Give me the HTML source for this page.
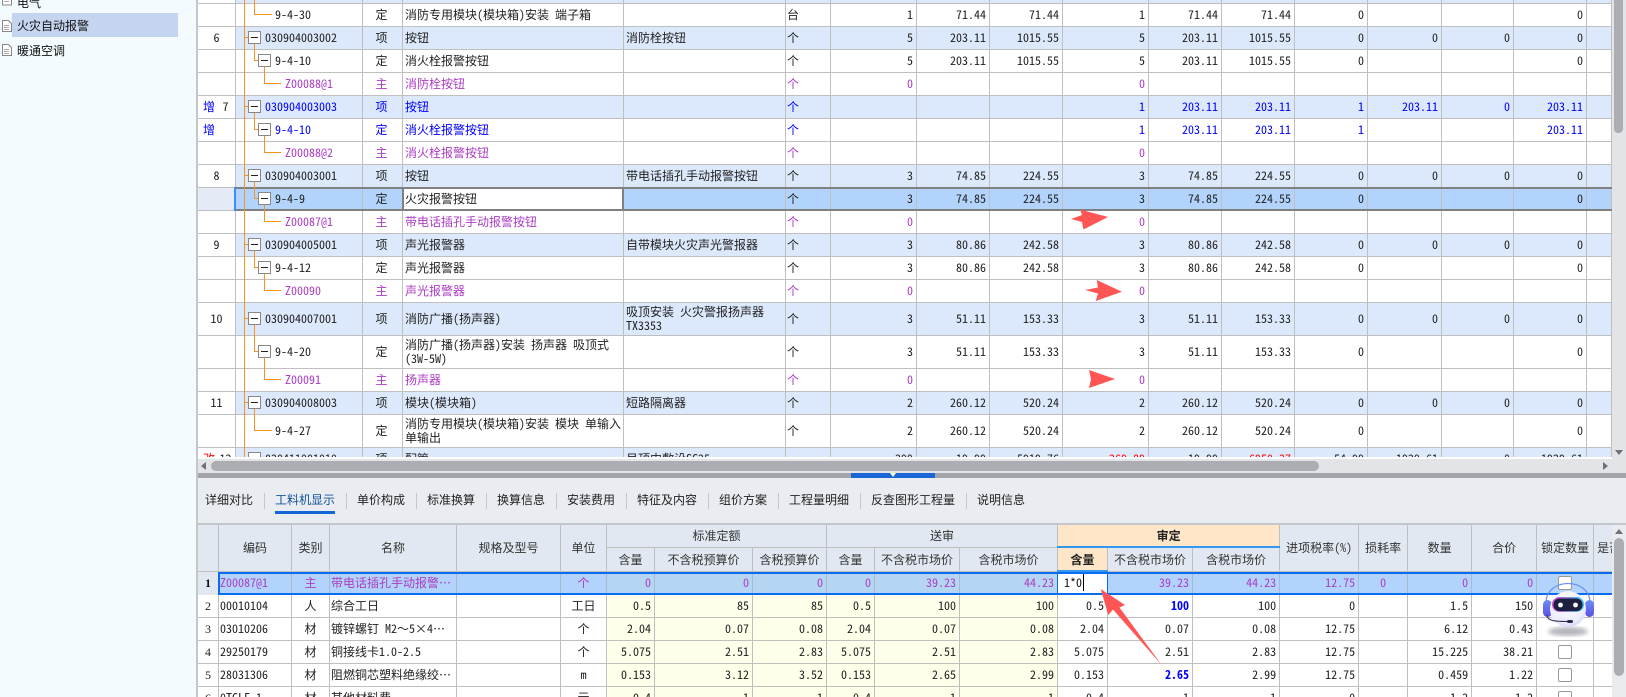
<!DOCTYPE html>
<html lang="zh"><head><meta charset="utf-8"><title>工料机显示</title>
<style>
*{box-sizing:border-box}
html,body{margin:0;padding:0}
body{width:1626px;height:697px;overflow:hidden;position:relative;background:#fff;font:12px/14px "WenQuanYi Zen Hei Mono","Noto Sans Mono CJK SC","WenQuanYi Zen Hei","Noto Sans CJK SC",monospace;color:#222}
.a{position:absolute}
#side{left:0;top:0;width:198px;height:697px;background:#f4fbff;border-right:2px solid #c4c6c9}
#side div{position:absolute;left:17px;white-space:nowrap;color:#111}
table{border-collapse:separate;border-spacing:0;table-layout:fixed;position:absolute;left:0}
td,th{padding:0 3px;border-right:1px solid #bfbfbf;border-bottom:1px solid #bfbfbf;font-weight:normal;overflow:hidden;white-space:nowrap;text-align:right;position:relative}
#top{left:198px;top:0;width:1414px;height:457px;overflow:hidden}
#top table{top:-19px;width:1414px}
#top tr{height:23px}
#top tr.h{height:33px}
#top td:nth-child(1){text-align:center;background:#fff;padding:0}
#top td:nth-child(2){text-align:left;padding-left:29px}
#top td:nth-child(3){text-align:center;padding:0 2px 0 0}
#top td:nth-child(4),#top td:nth-child(5){text-align:left;white-space:normal;padding-left:2px}
#top td:nth-child(6){text-align:left;padding-left:1px}
#top tr.b td{background:#dce9fc}
#top tr.b td:nth-child(1){background:#fff}
#top tr.s td{background:#b2d4fc}
#top tr.s td:nth-child(1){background:#e4eaf6}
#top tr.s td:nth-child(4){background:#fff}
tr.p td{color:#ac3cc4}
tr.u td{color:#00f}
#top tr.l1 td:nth-child(2){padding-left:39px}
#top tr.l2 td:nth-child(2){padding-left:49px}
#top td:nth-child(1) i{font-style:normal;position:absolute;left:5px;top:4px;color:#00f}
.r{color:#f00!important}
#bot{left:198px;top:525px;width:1414px;height:172px;overflow:hidden}
#bot table{top:0;width:1415px}
#bot thead th{background:#e2e8f1;text-align:center;color:#333;padding:0}
#bot tbody tr{height:23px}
#bot tbody td:nth-child(1){text-align:center;padding:0;font-family:"Liberation Serif",serif}
#bot tbody td:nth-child(2){text-align:left;padding-left:1px}
#bot tbody td:nth-child(3),#bot tbody td:nth-child(6),#bot tbody td:nth-child(17),#bot tbody td:nth-child(20){text-align:center;padding:0}
#bot tbody td:nth-child(4),#bot tbody td:nth-child(5){text-align:left;padding-left:1px}
#bot tbody td:nth-child(n+7):nth-child(-n+12){background:#ffffea}
#bot tr.f td{background:#b2d4fc!important;border-right-color:#a8bace;border-bottom-color:transparent}
#bot tr.f td:nth-child(n+7):nth-child(-n+12){background:#b4d6f2!important}
#bot tr.f td:nth-child(1){background:#e2e8f1!important;font-weight:bold;color:#111}
.o{background:#ffe6c8!important;color:#222!important;font-weight:bold!important}
.bb{color:#00f;font-weight:bold}
.c{display:inline-block;width:14px;height:14px;border:1px solid #999;border-radius:2px;background:#fff;vertical-align:middle}
.tab{position:absolute;top:493px;white-space:nowrap;color:#222}
.sp{position:absolute;top:493px;width:1px;height:16px;background:#c4c8cc}
</style></head><body>

<div class="a" id="side">
<div style="top:-4px">电气</div>
<div style="left:12px;top:13px;width:166px;height:24px;background:#c5d4ef"></div>
<div style="top:19px">火灾自动报警</div>
<div style="top:44px">暖通空调</div>
<svg class="a" style="left:0;top:0" width="14" height="60" fill="#fff" stroke="#888"><path d="M2.5-5h6l3 3v7h-9z"/><path d="M2.5 20.500h6l3 3v8h-9z"/><path d="M2.500 44.500h6l3 3v8h-9z"/><path d="M4 25.500h5M4 27.500h5M4 29.500h5M4 49.500h5M4 51.500h5M4 53.500h5M4 1.500h5" stroke="#aaa" fill="none"/></svg>
</div>

<div class="a" id="top">
<table>
<colgroup><col style="width:38px"><col style="width:127px"><col style="width:40px"><col style="width:221px"><col style="width:162px"><col style="width:45px"><col style="width:86px"><col style="width:73px"><col style="width:73px"><col style="width:86px"><col style="width:73px"><col style="width:73px"><col style="width:73px"><col style="width:74px"><col style="width:72px"><col style="width:73px"><col style="width:25px"></colgroup>
<tr class="b"><td></td><td></td><td></td><td></td><td></td><td></td><td></td><td></td><td></td><td></td><td></td><td></td><td></td><td></td><td></td><td></td><td></td></tr>
<tr class="l1"><td></td><td>9-4-30</td><td>定</td><td>消防专用模块(模块箱)安装 端子箱</td><td></td><td>台</td><td>1</td><td>71.44</td><td>71.44</td><td>1</td><td>71.44</td><td>71.44</td><td>0</td><td></td><td></td><td>0</td><td></td></tr>
<tr class="b"><td>6</td><td>030904003002</td><td>项</td><td>按钮</td><td>消防栓按钮</td><td>个</td><td>5</td><td>203.11</td><td>1015.55</td><td>5</td><td>203.11</td><td>1015.55</td><td>0</td><td>0</td><td>0</td><td>0</td><td></td></tr>
<tr class="l1"><td></td><td>9-4-10</td><td>定</td><td>消火栓报警按钮</td><td></td><td>个</td><td>5</td><td>203.11</td><td>1015.55</td><td>5</td><td>203.11</td><td>1015.55</td><td>0</td><td></td><td></td><td>0</td><td></td></tr>
<tr class="l2 p"><td></td><td>Z00088@1</td><td>主</td><td>消防栓按钮</td><td></td><td>个</td><td>0</td><td></td><td></td><td>0</td><td></td><td></td><td></td><td></td><td></td><td></td><td></td></tr>
<tr class="b u"><td style="color:#222"><i>增</i><span style="margin-left:18px">7</span></td><td>030904003003</td><td>项</td><td>按钮</td><td></td><td>个</td><td></td><td></td><td></td><td>1</td><td>203.11</td><td>203.11</td><td>1</td><td>203.11</td><td>0</td><td>203.11</td><td></td></tr>
<tr class="l1 u"><td><i>增</i></td><td>9-4-10</td><td>定</td><td>消火栓报警按钮</td><td></td><td>个</td><td></td><td></td><td></td><td>1</td><td>203.11</td><td>203.11</td><td>1</td><td></td><td></td><td>203.11</td><td></td></tr>
<tr class="l2 p"><td></td><td>Z00088@2</td><td>主</td><td>消火栓报警按钮</td><td></td><td>个</td><td></td><td></td><td></td><td>0</td><td></td><td></td><td></td><td></td><td></td><td></td><td></td></tr>
<tr class="b"><td>8</td><td>030904003001</td><td>项</td><td>按钮</td><td>带电话插孔手动报警按钮</td><td>个</td><td>3</td><td>74.85</td><td>224.55</td><td>3</td><td>74.85</td><td>224.55</td><td>0</td><td>0</td><td>0</td><td>0</td><td></td></tr>
<tr class="l1 s"><td></td><td>9-4-9</td><td>定</td><td>火灾报警按钮</td><td></td><td>个</td><td>3</td><td>74.85</td><td>224.55</td><td>3</td><td>74.85</td><td>224.55</td><td>0</td><td></td><td></td><td>0</td><td></td></tr>
<tr class="l2 p"><td></td><td>Z00087@1</td><td>主</td><td>带电话插孔手动报警按钮</td><td></td><td>个</td><td>0</td><td></td><td></td><td>0</td><td></td><td></td><td></td><td></td><td></td><td></td><td></td></tr>
<tr class="b"><td>9</td><td>030904005001</td><td>项</td><td>声光报警器</td><td>自带模块火灾声光警报器</td><td>个</td><td>3</td><td>80.86</td><td>242.58</td><td>3</td><td>80.86</td><td>242.58</td><td>0</td><td>0</td><td>0</td><td>0</td><td></td></tr>
<tr class="l1"><td></td><td>9-4-12</td><td>定</td><td>声光报警器</td><td></td><td>个</td><td>3</td><td>80.86</td><td>242.58</td><td>3</td><td>80.86</td><td>242.58</td><td>0</td><td></td><td></td><td>0</td><td></td></tr>
<tr class="l2 p"><td></td><td>Z00090</td><td>主</td><td>声光报警器</td><td></td><td>个</td><td>0</td><td></td><td></td><td>0</td><td></td><td></td><td></td><td></td><td></td><td></td><td></td></tr>
<tr class="b h"><td>10</td><td>030904007001</td><td>项</td><td>消防广播(扬声器)</td><td>吸顶安装 火灾警报扬声器<br>TX3353</td><td>个</td><td>3</td><td>51.11</td><td>153.33</td><td>3</td><td>51.11</td><td>153.33</td><td>0</td><td>0</td><td>0</td><td>0</td><td></td></tr>
<tr class="l1 h"><td></td><td>9-4-20</td><td>定</td><td>消防广播(扬声器)安装 扬声器 吸顶式<br>(3W-5W)</td><td></td><td>个</td><td>3</td><td>51.11</td><td>153.33</td><td>3</td><td>51.11</td><td>153.33</td><td>0</td><td></td><td></td><td>0</td><td></td></tr>
<tr class="l2 p"><td></td><td>Z00091</td><td>主</td><td>扬声器</td><td></td><td>个</td><td>0</td><td></td><td></td><td>0</td><td></td><td></td><td></td><td></td><td></td><td></td><td></td></tr>
<tr class="b"><td>11</td><td>030904008003</td><td>项</td><td>模块(模块箱)</td><td>短路隔离器</td><td>个</td><td>2</td><td>260.12</td><td>520.24</td><td>2</td><td>260.12</td><td>520.24</td><td>0</td><td>0</td><td>0</td><td>0</td><td></td></tr>
<tr class="l1 h"><td></td><td>9-4-27</td><td>定</td><td style="white-space:nowrap">消防专用模块(模块箱)安装 模块 单输入<br>单输出</td><td></td><td>个</td><td>2</td><td>260.12</td><td>520.24</td><td>2</td><td>260.12</td><td>520.24</td><td>0</td><td></td><td></td><td>0</td><td></td></tr>
<tr class="b"><td><i class="r">改</i><span style="margin-left:18px">12</span></td><td>030411001010</td><td>项</td><td>配管</td><td>吊顶内敷设SC25</td><td></td><td>399</td><td>19.99</td><td>5919.76</td><td class="r">269.89</td><td>19.99</td><td class="r">6950.37</td><td>54.99</td><td>1929.61</td><td>0</td><td>1929.61</td><td></td></tr>
</table>
</div>

<!-- selected row outline -->
<div class="a" style="left:236px;top:187px;width:1376px;height:2px;background:#808080"></div>
<div class="a" style="left:236px;top:209px;width:1376px;height:2px;background:#808080"></div>
<div class="a" style="left:234px;top:187px;width:2px;height:24px;background:#3d8ef0"></div>
<div class="a" style="left:402px;top:187px;width:2px;height:24px;background:#808080"></div>
<div class="a" style="left:622px;top:187px;width:2px;height:24px;background:#808080"></div>

<!-- tree lines and boxes -->
<svg class="a" style="left:0;top:0" width="300" height="457" fill="none">
<defs><g id="b"><rect x=".5" y=".5" width="12" height="12" fill="#fff" stroke="#888"/><path d="M3 6.500h7" stroke="#222"/></g></defs>
<path stroke="#f7931e" d="M244.500 0V457M244.500 37.500h4M244.500 106.500h4M244.500 175.500h4M244.500 244.500h4M244.500 318.500h4M244.500 402.500h4M254.500 0V14.500H272M254.500 43V60.500H258M264.500 66V83.500H281M254.500 112V129.500H258M264.500 135V152.500H281M254.500 181V198.500H258M264.500 204V221.500H281M254.500 250V267.500H258M264.500 273V290.500H281M254.500 324V351.500H258M264.500 357V379.500H281M254.500 408V430.500H272"/>
<use href="#b" x="248" y="31"/><use href="#b" x="248" y="100"/><use href="#b" x="248" y="169"/><use href="#b" x="248" y="238"/><use href="#b" x="248" y="312"/><use href="#b" x="248" y="396"/><use href="#b" x="248" y="452"/>
<use href="#b" x="258" y="54"/><use href="#b" x="258" y="123"/><use href="#b" x="258" y="192"/><use href="#b" x="258" y="261"/><use href="#b" x="258" y="345"/>
</svg>

<!-- top vertical scrollbar -->
<div class="a" style="left:1612px;top:0;width:14px;height:473px;background:#e3e4e7"></div>
<div class="a" style="left:1614px;top:-8px;width:9px;height:141px;background:#abadb2;border-radius:4px"></div>
<svg class="a" style="left:1612px;top:445px" width="14" height="12"><path d="M3 5h8l-4 5z" fill="#6e7076"/></svg>

<!-- horizontal scrollbar -->
<div class="a" style="left:198px;top:457px;width:1414px;height:2px;background:#fff"></div>
<div class="a" style="left:198px;top:459px;width:1414px;height:14px;background:#e3e4e7"></div>
<div class="a" style="left:211px;top:461px;width:1108px;height:10px;background:#abadb2;border-radius:5px"></div>
<svg class="a" style="left:197px;top:459px" width="14" height="14"><path d="M9 3v8L4 7z" fill="#6e7076"/></svg>
<svg class="a" style="left:1598px;top:459px" width="14" height="14"><path d="M5 3v8l5-4z" fill="#6e7076"/></svg>

<!-- splitter -->
<div class="a" style="left:198px;top:473px;width:1428px;height:5px;background:#a4a5a9"></div>
<div class="a" style="left:851px;top:473px;width:84px;height:5px;background:#1a66d6"></div>
<svg class="a" style="left:889px;top:473px" width="8" height="5"><path d="M1 0h6L4 4z" fill="#fff"/></svg>

<!-- tabs -->
<div class="a" style="left:198px;top:478px;width:1428px;height:45px;background:#e9edf1"></div>
<div class="a" style="left:198px;top:523px;width:1428px;height:2px;background:#c4c6c9"></div>
<span class="tab" style="left:205px">详细对比</span><i class="sp" style="left:264px"></i>
<span class="tab" style="left:275px;color:#14539a">工料机显示</span><i class="sp" style="left:346px"></i>
<div class="a" style="left:275px;top:511px;width:60px;height:3px;background:#1366d6"></div>
<span class="tab" style="left:357px">单价构成</span><i class="sp" style="left:416px"></i>
<span class="tab" style="left:427px">标准换算</span><i class="sp" style="left:486px"></i>
<span class="tab" style="left:497px">换算信息</span><i class="sp" style="left:556px"></i>
<span class="tab" style="left:567px">安装费用</span><i class="sp" style="left:626px"></i>
<span class="tab" style="left:637px">特征及内容</span><i class="sp" style="left:708px"></i>
<span class="tab" style="left:719px">组价方案</span><i class="sp" style="left:778px"></i>
<span class="tab" style="left:789px">工程量明细</span><i class="sp" style="left:860px"></i>
<span class="tab" style="left:871px">反查图形工程量</span><i class="sp" style="left:966px"></i>
<span class="tab" style="left:977px">说明信息</span>

<!-- bottom table -->
<div class="a" id="bot">
<table>
<colgroup><col style="width:21px"><col style="width:73px"><col style="width:38px"><col style="width:127px"><col style="width:104px"><col style="width:46px"><col style="width:48px"><col style="width:98px"><col style="width:74px"><col style="width:48px"><col style="width:85px"><col style="width:98px"><col style="width:50px"><col style="width:85px"><col style="width:87px"><col style="width:79px"><col style="width:49px"><col style="width:64px"><col style="width:65px"><col style="width:57px"><col style="width:19px"></colgroup>
<thead>
<tr style="height:23px"><th rowspan="2"></th><th rowspan="2">编码</th><th rowspan="2">类别</th><th rowspan="2">名称</th><th rowspan="2">规格及型号</th><th rowspan="2">单位</th><th colspan="3">标准定额</th><th colspan="3">送审</th><th colspan="3" class="o">审定</th><th rowspan="2">进项税率(%)</th><th rowspan="2">损耗率</th><th rowspan="2">数量</th><th rowspan="2">合价</th><th rowspan="2">锁定数量</th><th rowspan="2" style="text-align:left;padding-left:3px">是否</th></tr>
<tr style="height:24px"><th>含量</th><th>不含税预算价</th><th>含税预算价</th><th>含量</th><th>不含税市场价</th><th>含税市场价</th><th class="o">含量</th><th>不含税市场价</th><th>含税市场价</th></tr>
</thead>
<tbody>
<tr class="p f"><td>1</td><td>Z00087@1</td><td>主</td><td>带电话插孔手动报警…</td><td></td><td>个</td><td>0</td><td>0</td><td>0</td><td>0</td><td>39.23</td><td>44.23</td><td style="background:#fff!important"></td><td>39.23</td><td>44.23</td><td>12.75</td><td>0</td><td>0</td><td>0</td><td><span class="c"></span></td><td></td></tr>
<tr><td>2</td><td>00010104</td><td>人</td><td>综合工日</td><td></td><td>工日</td><td>0.5</td><td>85</td><td>85</td><td>0.5</td><td>100</td><td>100</td><td>0.5</td><td class="bb">100</td><td>100</td><td>0</td><td></td><td>1.5</td><td>150</td><td></td><td></td></tr>
<tr><td>3</td><td>03010206</td><td>材</td><td>镀锌螺钉 M2～5×4…</td><td></td><td>个</td><td>2.04</td><td>0.07</td><td>0.08</td><td>2.04</td><td>0.07</td><td>0.08</td><td>2.04</td><td>0.07</td><td>0.08</td><td>12.75</td><td></td><td>6.12</td><td>0.43</td><td></td><td></td></tr>
<tr><td>4</td><td>29250179</td><td>材</td><td>铜接线卡1.0-2.5</td><td></td><td>个</td><td>5.075</td><td>2.51</td><td>2.83</td><td>5.075</td><td>2.51</td><td>2.83</td><td>5.075</td><td>2.51</td><td>2.83</td><td>12.75</td><td></td><td>15.225</td><td>38.21</td><td><span class="c"></span></td><td></td></tr>
<tr><td>5</td><td>28031306</td><td>材</td><td>阻燃铜芯塑料绝缘绞…</td><td></td><td>m</td><td>0.153</td><td>3.12</td><td>3.52</td><td>0.153</td><td>2.65</td><td>2.99</td><td>0.153</td><td class="bb">2.65</td><td>2.99</td><td>12.75</td><td></td><td>0.459</td><td>1.22</td><td><span class="c"></span></td><td></td></tr>
<tr><td>6</td><td>0TCLF-1</td><td>材</td><td>其他材料费</td><td></td><td>元</td><td>0.4</td><td>1</td><td>1</td><td>0.4</td><td>1</td><td>1</td><td>0.4</td><td>1</td><td>1</td><td>0</td><td></td><td>1.2</td><td>1.2</td><td><span class="c"></span></td><td></td></tr>
</tbody>
</table>
</div>

<!-- focused row -->
<div class="a" style="left:218px;top:572px;width:1394px;height:2px;background:#0a6cf0"></div>
<div class="a" style="left:218px;top:593px;width:1394px;height:2px;background:#0a6cf0"></div>
<div class="a" style="left:218px;top:572px;width:2px;height:23px;background:#0a6cf0"></div>
<div class="a" style="left:1057px;top:546px;width:223px;height:2px;background:#3399ee"></div>
<div class="a" style="left:1057px;top:570px;width:51px;height:2px;background:#3399ee"></div>
<div class="a" style="left:1057px;top:572px;width:51px;height:23px;background:#fff;border:2px solid #0a6cf0;border-left-width:1px;border-right-width:1px;padding:2px 0 0 6px;color:#111">1*0<span style="border-left:1px solid #000;margin-left:1px"></span></div>

<!-- bottom vertical scrollbar -->
<div class="a" style="left:1612px;top:525px;width:14px;height:172px;background:#e9ebee"></div>
<div class="a" style="left:1614px;top:538px;width:10px;height:138px;background:#abadb2;border-radius:5px"></div>
<svg class="a" style="left:1612px;top:526px" width="14" height="10"><path d="M3 8h8L7 3z" fill="#6e7076"/></svg>

<!-- red arrows -->
<svg class="a" style="left:0;top:0" width="1626" height="697" fill="#ff5555">
<polygon points="1071,219 1082,215 1080,209.500 1108,217 1083.500,229.500 1082,222"/>
<polygon points="1085,290 1098,287.500 1096.700,280 1122,291.700 1095.700,301 1098,293.500"/>
<polygon points="1089,370 1115,379 1089,388 1091,379"/>
<polygon points="1100.700,589 1125,605 1119.500,607.500 1161.700,665 1113,609.500 1108.300,615"/>
</svg>

<!-- robot assistant -->
<svg class="a" style="left:1535px;top:575px" width="66" height="68">
<defs>
<radialGradient id="h" cx=".45" cy=".35" r=".75"><stop offset="0" stop-color="#fff"/><stop offset=".7" stop-color="#eceefc"/><stop offset="1" stop-color="#c3c8f0"/></radialGradient>
<linearGradient id="v" x1="0" x2="1"><stop offset="0" stop-color="#e040d0"/><stop offset="1" stop-color="#30c8f0"/></linearGradient>
<linearGradient id="e" x1="0" x2="0" y1="0" y2="1"><stop offset="0" stop-color="#6f8df5"/><stop offset="1" stop-color="#5a50e0"/></linearGradient>
<filter id="bl"><feGaussianBlur stdDeviation="2"/></filter>
</defs>
<ellipse cx="33" cy="56.500" rx="20" ry="4.500" fill="#b4b6bc" filter="url(#bl)"/>
<path d="M11 28C11 2 55 2 55 28" fill="none" stroke="#6f8df5" stroke-width="1.200"/>
<rect x="8" y="25" width="9" height="17" rx="4.500" fill="url(#e)"/>
<rect x="50" y="25" width="9" height="17" rx="4.500" fill="url(#e)"/>
<circle cx="33" cy="34" r="18" fill="url(#h)"/>
<rect x="17" y="22" width="32" height="15" rx="7.500" fill="url(#v)"/>
<rect x="18.500" y="23.500" width="29" height="12.500" rx="6" fill="#1d2040"/>
<circle cx="25.500" cy="30" r="2.400" fill="#fff"/><circle cx="40.500" cy="30" r="2.400" fill="#fff"/>
<path d="M12 40C12 46 20 46.500 33 46.500" fill="none" stroke="#2a2d50" stroke-width="1"/>
<rect x="32" y="45" width="6" height="3" rx="1.500" fill="#2a2d50"/>
</svg>
</body></html>
